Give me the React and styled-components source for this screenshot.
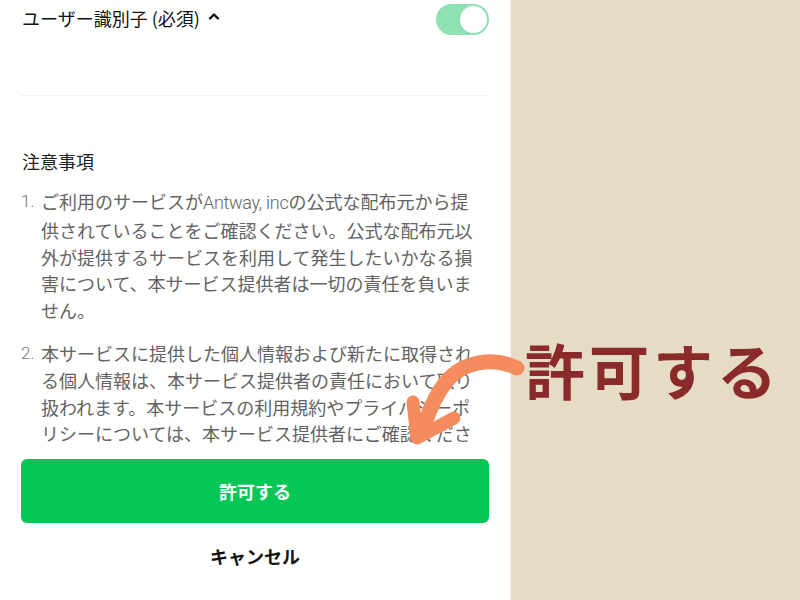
import styled, { createGlobalStyle } from "styled-components";

const GlobalStyle = createGlobalStyle`
  html, body {
    margin: 0;
    padding: 0;
  }
  body {
    font-family: "Noto Sans CJK JP", "Noto Sans", sans-serif;
    background: #e6dcc6;
  }
`;

function App() {
  const notes = [
    [
      <>ご利用のサービスが<Latin>Antway, inc</Latin>の公式な配布元から提</>,
      "供されていることをご確認ください。公式な配布元以",
      "外が提供するサービスを利用して発生したいかなる損",
      "害について、本サービス提供者は一切の責任を負いま",
      "せん。",
    ],
    [
      "本サービスに提供した個人情報および新たに取得され",
      "る個人情報は、本サービス提供者の責任において取り",
      "扱われます。本サービスの利用規約やプライバシーポ",
      "リシーについては、本サービス提供者にご確認くださ",
      "い。",
    ],
  ];

  return (
    <Page>
      <GlobalStyle />
      <Panel>
        <Header>
          <Title>
            ユーザー識別子 (必須)
            <svg width="12" height="10" viewBox="0 0 12 10">
              <path
                d="M2 7.5 L6 3.5 L10 7.5"
                fill="none"
                stroke="#111"
                strokeWidth="2.4"
                strokeLinecap="round"
                strokeLinejoin="round"
              />
            </svg>
          </Title>
          <Toggle>
            <Knob />
          </Toggle>
        </Header>
        <Notes>
          <NotesTitle>注意事項</NotesTitle>
          <List>
            {notes.map((lines, i) => (
              <Item key={i}>
                <Num>{i + 1}.</Num>
                <ItemText>
                  {lines.map((line, j) => (
                    <Line key={j}>{line}</Line>
                  ))}
                </ItemText>
              </Item>
            ))}
          </List>
        </Notes>
        <Actions>
          <Allow>許可する</Allow>
          <Cancel>キャンセル</Cancel>
        </Actions>
      </Panel>
      <Side>
        <Callout>許可する</Callout>
      </Side>
      <Arrow width="800" height="600" viewBox="0 0 800 600">
        <path
          d="M517 368 C 492 356 462 362 446 382 C 436 394 430 408 424 426"
          fill="none"
          stroke="#f68b5e"
          strokeWidth="15"
          strokeLinecap="round"
        />
        <path
          d="M413 402 L 417 438 L 454 418"
          fill="none"
          stroke="#f68b5e"
          strokeWidth="13"
          strokeLinecap="round"
          strokeLinejoin="round"
        />
      </Arrow>
    </Page>
  );
}

export default App;

const Page = styled.div`
  position: relative;
  display: flex;
  width: 800px;
  height: 600px;
  overflow: hidden;
`;

const Panel = styled.div`
  width: 511px;
  height: 600px;
  box-sizing: border-box;
  padding: 0 21px 0 21px;
  background: #fff;
  border-right: 1px solid #f6f2ea;
  display: flex;
  flex-direction: column;
`;

const Header = styled.div`
  height: 95px;
  border-bottom: 1px solid #f1f1f1;
  display: flex;
  justify-content: space-between;
  align-items: flex-start;
  flex-shrink: 0;
`;

const Title = styled.div`
  display: flex;
  align-items: center;
  gap: 8px;
  height: 35px;
  padding-left: 1px;
  font-size: 18px;
  color: #111;
  svg {
    margin-top: -3px;
  }
`;

const Toggle = styled.div`
  margin-top: 4px;
  width: 53px;
  height: 31px;
  border-radius: 16px;
  background: #8fe1b3;
  display: flex;
  align-items: center;
  justify-content: flex-end;
  padding: 0 2px;
  box-sizing: border-box;
`;

const Knob = styled.div`
  width: 27px;
  height: 27px;
  border-radius: 50%;
  background: #fff;
`;

const Notes = styled.div`
  height: 349px;
  overflow: hidden;
  flex-shrink: 0;
  padding-top: 52px;
  box-sizing: border-box;
`;

const NotesTitle = styled.div`
  font-size: 18px;
  line-height: 26px;
  color: #222;
  padding-left: 1px;
`;

const List = styled.div`
  margin-top: 14px;
  display: flex;
  flex-direction: column;
  gap: 16px;
`;

const Item = styled.div`
  display: grid;
  grid-template-columns: 20px 1fr;
  font-size: 18px;
  line-height: 26.8px;
  color: #636363;
`;

const Num = styled.span`
  font-family: Roboto, sans-serif;
  font-weight: 300;
  font-size: 17px;
  color: #777;
`;

const ItemText = styled.div`
  white-space: nowrap;
`;

const Line = styled.div``;

const Latin = styled.span`
  font-family: Roboto, "Noto Sans CJK JP", sans-serif;
  font-weight: 300;
  letter-spacing: -0.3px;
`;

const Actions = styled.div`
  display: flex;
  flex-direction: column;
  align-items: stretch;
  padding-top: 14px;
`;

const Allow = styled.button`
  height: 64px;
  border: none;
  border-radius: 6px;
  background: #06c755;
  color: #fff;
  font-family: "Noto Sans CJK JP", sans-serif;
  font-size: 18px;
  font-weight: 700;
  cursor: pointer;
`;

const Cancel = styled.button`
  margin-top: 15px;
  height: 36px;
  border: none;
  background: none;
  color: #111;
  font-family: "Noto Sans CJK JP", sans-serif;
  font-size: 18px;
  font-weight: 700;
  cursor: pointer;
`;

const Side = styled.div`
  flex: 1;
  background: #e6dcc6;
  padding: 330px 0 0 14px;
  box-sizing: border-box;
`;

const Callout = styled.div`
  font-family: "Noto Sans CJK JP", sans-serif;
  font-weight: 700;
  font-size: 60px;
  line-height: 78px;
  letter-spacing: 4px;
  color: #8a2a2a;
`;

const Arrow = styled.svg`
  position: absolute;
  left: 0;
  top: 0;
  pointer-events: none;
`;
